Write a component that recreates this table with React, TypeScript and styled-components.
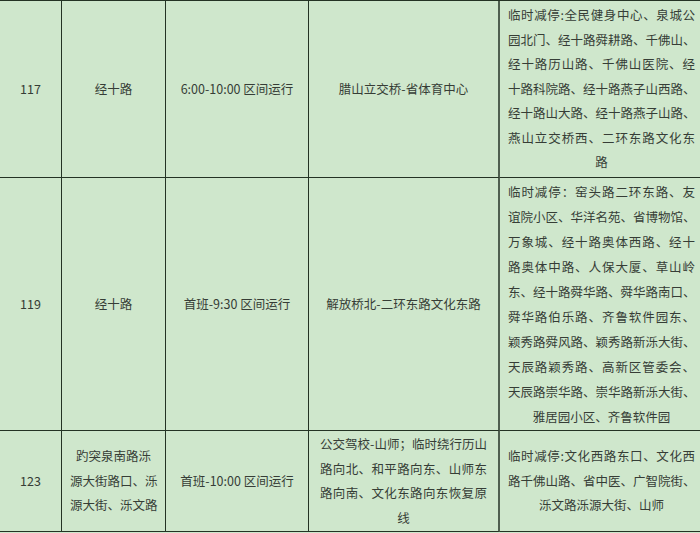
import React from 'react'
import styled, { createGlobalStyle } from 'styled-components'

const Global = createGlobalStyle`
    html, body {
        margin:0;
        padding:0;
        background:#cfe7cc;
        overflow:hidden;
    }
    body {
        font-family:"Noto Sans CJK SC", "Noto Sans", sans-serif;
        color:#363d36;
    }
`

const Table = styled.table`
    border-collapse:separate;
    border-spacing:0;
    table-layout:fixed;
    width:703px;
    border-top:1px solid #243324;
    background:#cfe7cc;
`
const Cell = styled.td<any>`
    box-sizing:border-box;
    width:${({ w }) => w}px;
    height:${({ h }) => h}px;
    padding:0 ${({ px }) => px ?? 6}px;
    border-right:${({ thick }) => thick ? '2px solid #4f5f4f' : '1px solid #243324'};
    border-bottom:1px solid #243324;
    vertical-align:middle;
    text-align:center;
    font-size:12.5px;
    line-height:${({ lh }) => lh ?? 24.5}px;
    white-space:nowrap;
    overflow:hidden;
`
const LastCell = styled(Cell)`
    border-right:none;
`
const Line = styled.div<any>`
    display:block;
    text-align:${({ fill }) => fill ? 'justify' : 'center'};
    text-align-last:${({ fill }) => fill ? 'justify' : 'center'};
    white-space:nowrap;
`

type Row = {
    no: string
    road: string[]
    time: string
    section: string[]
    stops: string[]
    h: number
    lh?: number
}

const rows: Row[] = [
    {
        no: '117',
        road: ['经十路'],
        time: '6:00-10:00 区间运行',
        section: ['腊山立交桥-省体育中心'],
        stops: [
            '临时减停:全民健身中心、泉城公',
            '园北门、经十路舜耕路、千佛山、',
            '经十路历山路、千佛山医院、经',
            '十路科院路、经十路燕子山西路、',
            '经十路山大路、经十路燕子山路、',
            '燕山立交桥西、二环东路文化东',
            '路',
        ],
        h: 177,
    },
    {
        no: '119',
        road: ['经十路'],
        time: '首班-9:30 区间运行',
        section: ['解放桥北-二环东路文化东路'],
        stops: [
            '临时减停：窑头路二环东路、友',
            '谊院小区、华洋名苑、省博物馆、',
            '万象城、经十路奥体西路、经十',
            '路奥体中路、人保大厦、草山岭',
            '东、经十路舜华路、舜华路南口、',
            '舜华路伯乐路、齐鲁软件园东、',
            '颖秀路舜风路、颖秀路新泺大街、',
            '天辰路颖秀路、高新区管委会、',
            '天辰路崇华路、崇华路新泺大街、',
            '雅居园小区、齐鲁软件园',
        ],
        h: 253,
        lh: 25,
    },
    {
        no: '123',
        road: ['趵突泉南路泺', '源大街路口、泺', '源大街、泺文路'],
        time: '首班-10:00 区间运行',
        section: [
            '公交驾校-山师；临时绕行历山',
            '路向北、和平路向东、山师东',
            '路向南、文化东路向东恢复原',
            '线',
        ],
        stops: [
            '临时减停:文化西路东口、文化西',
            '路千佛山路、省中医、广智院街、',
            '泺文路泺源大街、山师',
        ],
        h: 101,
    },
]

// every line but the last one of a block is stretched edge to edge
const Lines = ({ items, justify = true }: { items: string[]; justify?: boolean }) => (
    <>
        {items.map((t, i) => (
            <Line key={i} fill={justify && items.length > 1 && i < items.length - 1}>
                {t}
            </Line>
        ))}
    </>
)

export default function App() {
    return (
        <>
            <Global />
            <Table>
                <tbody>
                    {rows.map((r) => (
                        <tr key={r.no}>
                            <Cell w={62} h={r.h}>{r.no}</Cell>
                            <Cell w={104} h={r.h} px={8}>
                                <Lines items={r.road} justify={false} />
                            </Cell>
                            <Cell w={143} h={r.h}>{r.time}</Cell>
                            <Cell w={191} h={r.h} px={11} thick>
                                <Lines items={r.section} />
                            </Cell>
                            <LastCell w={203} h={r.h} px={8} lh={r.lh}>
                                <Lines items={r.stops} />
                            </LastCell>
                        </tr>
                    ))}
                </tbody>
            </Table>
        </>
    )
}
